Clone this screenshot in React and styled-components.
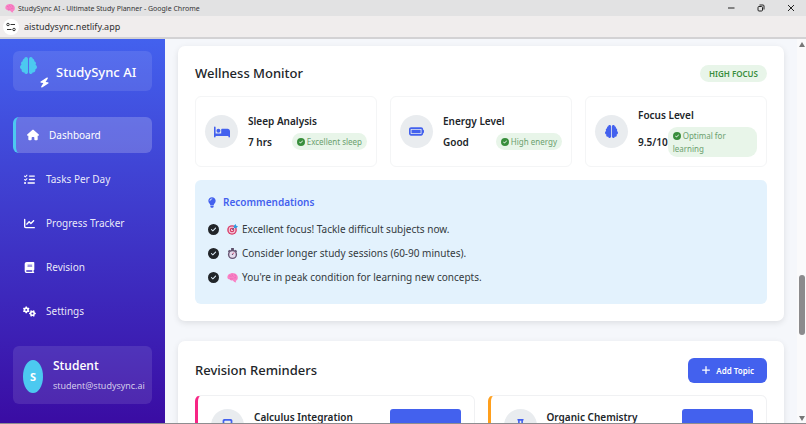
import React from 'react';
import styled, { createGlobalStyle } from 'styled-components';
import {
    FaBatteryFull,
    FaBed,
    FaBolt,
    FaBook,
    FaBrain,
    FaCalculator,
    FaChartLine,
    FaCircleCheck,
    FaFlask,
    FaGears,
    FaHouse,
    FaLightbulb,
    FaListCheck,
    FaPlus,
} from 'react-icons/fa6';

const AppGlobal = createGlobalStyle`
* {
    box-sizing:border-box;
    margin:0;
    padding:0;
}
body {
    background-color:#f5f7fb;
    color:#212529;
    font-family:"Noto Sans", "Open Sans", sans-serif;
    font-size:11px;
    overflow:hidden;
}
button, input {
    font-family:inherit;
    border:none;
}
svg {
    display:block;
    flex-shrink:0;
}
`

const Window = styled.div`
    display:flex;
    flex-direction:column;
    height:100vh;
    border-bottom:1px solid #8d8d90;
`

/* Browser chrome */
const TitleBar = styled.header`
    display:flex;
    align-items:center;
    gap:3px;
    height:16px;
    flex-shrink:0;
    padding-left:5px;
    background-color:#e2e2e3;
    color:#333;
    font-size:7px;
`
const WindowButtons = styled.div`
    display:flex;
    margin-left:auto;
`
const WindowButton = styled.button`
    display:flex;
    align-items:center;
    justify-content:center;
    width:30px;
    height:16px;
    background:none;
`
const AddressBar = styled.div`
    display:flex;
    align-items:center;
    gap:5px;
    height:23px;
    flex-shrink:0;
    padding-left:3px;
    background-color:#f0eded;
    border-bottom:2px solid #d3d2d4;
`
const SiteInfo = styled.button`
    display:flex;
    align-items:center;
    justify-content:center;
    width:16px;
    height:16px;
    border-radius:50%;
    background-color:#fff;
`
const Address = styled.input`
    flex:1;
    background:none;
    color:#303033;
    font-size:9px;
    outline:none;
`

const Page = styled.div`
    display:flex;
    flex:1;
    min-height:0;
`

/* Sidebar */
const Sidebar = styled.aside`
    width:165px;
    flex-shrink:0;
    padding:12px 13px;
    background:linear-gradient(180deg, #4361ee, #3a0ca3);
    color:#fff;
`
const Logo = styled.div`
    display:flex;
    align-items:center;
    gap:6px;
    height:40px;
    padding:2px 7px 0;
    border-radius:6px;
    background-color:rgba(255,255,255,0.1);
    font-size:13px;
    font-weight:500;
`
const LogoIcon = styled.span`
    display:flex;
    flex-direction:column;
    gap:3px;
    width:30px;
    color:#4cc9f0;
`
const LogoBolt = styled(FaBolt)`
    align-self:flex-end;
    color:#fff;
    transform:rotate(8deg);
`
const Nav = styled.nav`
    display:flex;
    flex-direction:column;
    gap:8px;
    margin:26px 0 17px;
`
const NavLink = styled.a`
    display:flex;
    align-items:center;
    gap:10px;
    height:36px;
    padding-left:10px;
    border-left:${props => props.$active ? '3px solid #4cc9f0' : 'none'};
    border-radius:6px;
    background-color:${props => props.$active ? 'rgba(255,255,255,0.2)' : 'transparent'};
    color:${props => props.$active ? '#fff' : 'rgba(255,255,255,0.9)'};
    font-size:10px;
    text-decoration:none;
`
const NavIcon = styled.span`
    display:flex;
    justify-content:center;
    width:13px;
    color:#fff;
`
const User = styled.div`
    display:flex;
    align-items:center;
    gap:10px;
    height:58px;
    padding:2px 10px 0;
    border-radius:6px;
    background-color:rgba(255,255,255,0.1);
    font-family:"Open Sans", "Noto Sans", sans-serif;
`
const Avatar = styled.div`
    display:flex;
    align-items:center;
    justify-content:center;
    width:20px;
    height:33px;
    flex-shrink:0;
    border-radius:50%;
    background-color:#4cc9f0;
    font-size:11px;
    font-weight:700;
`
const UserName = styled.p`
    font-size:12px;
    font-weight:600;
    line-height:20px;
`
const UserMail = styled.p`
    color:rgba(255,255,255,0.8);
    font-size:9px;
    line-height:20px;
`

/* Content */
const Main = styled.main`
    display:flex;
    flex-direction:column;
    gap:20px;
    flex:1;
    min-width:0;
    padding:7px 13px 0;
    overflow:hidden;
`
const Panel = styled.section`
    flex-shrink:0;
    padding:16px 17px 17px;
    border-radius:7px;
    background-color:#fff;
    box-shadow:0 2px 6px rgba(0,0,0,0.1);
`
const PanelHeader = styled.div`
    display:flex;
    align-items:center;
    justify-content:space-between;
    height:${props => props.$tall ? '26px' : '22px'};
    margin-bottom:12px;
`
const PanelTitle = styled.h2`
    font-size:13px;
    font-weight:500;
`
const FocusBadge = styled.span`
    padding:0 9px;
    border-radius:9px;
    background-color:#e8f5e9;
    color:#388e3c;
    font-size:8px;
    font-weight:600;
    line-height:17px;
`
const Metrics = styled.div`
    display:grid;
    grid-template-columns:repeat(3, 1fr);
    gap:13px;
    margin-bottom:13px;
`
const Metric = styled.div`
    display:flex;
    align-items:center;
    gap:10px;
    height:71px;
    padding:0 9px;
    border:1px solid #f4f5f6;
    border-radius:6px;
`
const IconCircle = styled.span`
    display:flex;
    align-items:center;
    justify-content:center;
    width:33px;
    height:33px;
    flex-shrink:0;
    border-radius:50%;
    background-color:#e9ecef;
    color:#4361ee;
`
const MetricBody = styled.div`
    flex:1;
    min-width:0;
`
const ItemTitle = styled.h3`
    font-size:10px;
    font-weight:600;
    line-height:16px;
`
const MetricRow = styled.div`
    display:flex;
    align-items:center;
    justify-content:space-between;
    margin-top:4px;
    font-size:10px;
    font-weight:600;
`
const Status = styled.span`
    padding:2px 5px;
    border-radius:9px;
    background-color:#e8f5e9;
    color:#6ba06e;
    font-size:8px;
    font-weight:400;
    line-height:13px;

    svg {
        display:inline-block;
        margin-right:2px;
        color:#388e3c;
        vertical-align:-1px;
    }
`
const Recommendations = styled.div`
    padding:13px 13px 15px;
    border-radius:6px;
    background-color:#e3f2fd;
`
const RecommendationsTitle = styled.h3`
    display:flex;
    align-items:center;
    gap:7px;
    margin-bottom:6px;
    color:#4361ee;
    font-size:10px;
    font-weight:600;
    line-height:18px;
`
const TitleIcon = styled(FaLightbulb)`
    width:8px;
`
const Tips = styled.ul`
    list-style:none;
`
const Tip = styled.li`
    display:flex;
    align-items:center;
    gap:4px;
    height:24px;
    color:#343a40;
    font-size:10px;
`
const TipCheck = styled(FaCircleCheck)`
    margin-right:4px;
    color:#212529;
`
const AddButton = styled.button`
    display:flex;
    align-items:center;
    gap:5px;
    height:25px;
    padding:0 13px;
    border-radius:6px;
    background-color:#4361ee;
    color:#fff;
    font-size:8px;
    font-weight:600;
`
const Reminders = styled.div`
    display:grid;
    grid-template-columns:repeat(2, 1fr);
    gap:13px;
`
const Reminder = styled.article`
    display:flex;
    align-items:flex-start;
    gap:10px;
    height:84px;
    padding:13px;
    border:1px solid #f0f1f3;
    border-left:3px solid ${props => props.$color};
    border-radius:6px;
`
const ReminderTitle = styled(ItemTitle)`
    flex:1;
`
const ReviewButton = styled.button`
    width:71px;
    height:26px;
    border-radius:3px;
    background-color:#4361ee;
`

/* Scroll track */
const ScrollTrack = styled.div`
    display:flex;
    flex-direction:column;
    align-items:center;
    justify-content:space-between;
    width:9px;
    flex-shrink:0;
    padding:3px 0 2px;
    background-color:#fafafb;
`
const ScrollThumb = styled.div`
    width:6px;
    height:60px;
    margin-top:auto;
    margin-bottom:81px;
    border-radius:3px;
    background-color:#8b8b8d;
`

const BrainEmoji = ({ size = 11 }) => (
    <svg width={size} height={size} viewBox="0 0 24 24" aria-hidden="true">
        <path d="M1 13C0 8 3 4 8 3c5-2 11 0 13 3 3 3 3 7 2 10-1 2-2 3-4 3l1 4-4-1-4-4c-3 1-6 0-6-2-3 0-4-1-5-3z" fill="#f982c5" />
        <path d="M5 9c2-2 4 0 4 2M11 5c-1 3 2 3 3 5M17 5c0 2 0 3 3 4M6 15c3 1 4-1 7 0M15 14c1-2 3-2 5-1" fill="none" stroke="#e05aac" strokeWidth="1.2" />
    </svg>
)

const TargetEmoji = () => (
    <svg width="11" height="11" viewBox="0 0 24 24" aria-hidden="true">
        <circle cx="11" cy="13" r="10.5" fill="#d83b68" />
        <circle cx="11" cy="13" r="7.5" fill="#f3c9da" />
        <circle cx="11" cy="13" r="5" fill="#d83b68" />
        <circle cx="11" cy="13" r="2" fill="#fff" />
        <path d="M11 13L19 5" stroke="#3a6fa8" strokeWidth="2" />
        <path d="M15 8V4l4-4 1 4 4 1-4 4z" fill="#2f9be0" />
    </svg>
)

const StopwatchEmoji = () => (
    <svg width="11" height="11" viewBox="0 0 24 24" aria-hidden="true">
        <path d="M9 0h6v5H9zM19 4l3 3-2 2-3-3zM5 4L2 7l2 2 3-3z" fill="#5b4d68" />
        <circle cx="12" cy="14" r="10" fill="#665472" />
        <circle cx="12" cy="14" r="7" fill="#e5dcec" />
        <path d="M12 14l3-4" stroke="#d83b68" strokeWidth="2" />
        <circle cx="12" cy="14" r="1.5" fill="#665472" />
    </svg>
)

const SiteIcon = () => (
    <svg width="10" height="10" viewBox="0 0 20 20" fill="none" stroke="#333" strokeWidth="2" aria-hidden="true">
        <circle cx="4" cy="5" r="2.5" />
        <path d="M9 5h9M2 15h9" />
        <circle cx="16" cy="15" r="2.5" />
    </svg>
)

const links = [
    { label: 'Dashboard', icon: <FaHouse size={12} />, active: true },
    { label: 'Tasks Per Day', icon: <FaListCheck size={11} /> },
    { label: 'Progress Tracker', icon: <FaChartLine size={11} /> },
    { label: 'Revision', icon: <FaBook size={11} /> },
    { label: 'Settings', icon: <FaGears size={13} /> },
]

const metrics = [
    { title: 'Sleep Analysis', value: '7 hrs', status: 'Excellent sleep', icon: <FaBed size={16} /> },
    { title: 'Energy Level', value: 'Good', status: 'High energy', icon: <FaBatteryFull size={15} /> },
    { title: 'Focus Level', value: '9.5/10', status: 'Optimal for learning', icon: <FaBrain size={13} /> },
]

const tips = [
    { emoji: <TargetEmoji />, text: 'Excellent focus! Tackle difficult subjects now.' },
    { emoji: <StopwatchEmoji />, text: 'Consider longer study sessions (60-90 minutes).' },
    { emoji: <BrainEmoji />, text: "You're in peak condition for learning new concepts." },
]

const reminders = [
    { title: 'Calculus Integration', color: '#f72585', icon: <FaCalculator size={13} /> },
    { title: 'Organic Chemistry', color: '#ff9f1c', icon: <FaFlask size={13} /> },
]

const App = () => {

    return(
        <>
        <AppGlobal/>
        <Window>

            {/* Browser chrome */}
            <TitleBar>
                <BrainEmoji size={10} />
                <span>StudySync AI - Ultimate Study Planner - Google Chrome</span>
                <WindowButtons>
                    <WindowButton aria-label="Minimize">
                        <svg width="8" height="8" viewBox="0 0 8 8"><path d="M1 4h6.5" stroke="#222" /></svg>
                    </WindowButton>
                    <WindowButton aria-label="Restore">
                        <svg width="8" height="8" viewBox="0 0 8 8" fill="none" stroke="#222"><rect x="1" y="2.5" width="4.5" height="4.5" rx="1" /><path d="M2.5 1h3.5a1 1 0 0 1 1 1v3.5" /></svg>
                    </WindowButton>
                    <WindowButton aria-label="Close">
                        <svg width="8" height="8" viewBox="0 0 8 8"><path d="M1 1l6 6M7 1L1 7" stroke="#222" /></svg>
                    </WindowButton>
                </WindowButtons>
            </TitleBar>
            <AddressBar>
                <SiteInfo aria-label="Site information"><SiteIcon /></SiteInfo>
                <Address aria-label="Address" defaultValue="aistudysync.netlify.app" />
            </AddressBar>

            <Page>
                {/* Sidebar */}
                <Sidebar>
                    <Logo>
                        <LogoIcon>
                            <FaBrain size={17} />
                            <LogoBolt size={11} />
                        </LogoIcon>
                        StudySync AI
                    </Logo>
                    <Nav>
                        {links.map(link => (
                            <NavLink key={link.label} href="#" $active={link.active}>
                                <NavIcon>{link.icon}</NavIcon>
                                {link.label}
                            </NavLink>
                        ))}
                    </Nav>
                    <User>
                        <Avatar>S</Avatar>
                        <div>
                            <UserName>Student</UserName>
                            <UserMail>student@studysync.ai</UserMail>
                        </div>
                    </User>
                </Sidebar>

                <Main>
                    {/* Wellness */}
                    <Panel>
                        <PanelHeader>
                            <PanelTitle>Wellness Monitor</PanelTitle>
                            <FocusBadge>HIGH FOCUS</FocusBadge>
                        </PanelHeader>
                        <Metrics>
                            {metrics.map(metric => (
                                <Metric key={metric.title}>
                                    <IconCircle>{metric.icon}</IconCircle>
                                    <MetricBody>
                                        <ItemTitle>{metric.title}</ItemTitle>
                                        <MetricRow>
                                            {metric.value}
                                            <Status><FaCircleCheck size={8} />{metric.status}</Status>
                                        </MetricRow>
                                    </MetricBody>
                                </Metric>
                            ))}
                        </Metrics>
                        <Recommendations>
                            <RecommendationsTitle><TitleIcon size={11} />Recommendations</RecommendationsTitle>
                            <Tips>
                                {tips.map(tip => (
                                    <Tip key={tip.text}>
                                        <TipCheck size={11} />
                                        {tip.emoji}
                                        {tip.text}
                                    </Tip>
                                ))}
                            </Tips>
                        </Recommendations>
                    </Panel>

                    {/* Revision */}
                    <Panel>
                        <PanelHeader $tall>
                            <PanelTitle>Revision Reminders</PanelTitle>
                            <AddButton><FaPlus size={10} />Add Topic</AddButton>
                        </PanelHeader>
                        <Reminders>
                            {reminders.map(reminder => (
                                <Reminder key={reminder.title} $color={reminder.color}>
                                    <IconCircle>{reminder.icon}</IconCircle>
                                    <ReminderTitle>{reminder.title}</ReminderTitle>
                                    <ReviewButton aria-label={reminder.title} />
                                </Reminder>
                            ))}
                        </Reminders>
                    </Panel>
                </Main>

                <ScrollTrack>
                    <svg width="6" height="5" viewBox="0 0 6 5"><path d="M3 0l3 5H0z" fill="#777" /></svg>
                    <ScrollThumb />
                    <svg width="6" height="5" viewBox="0 0 6 5"><path d="M3 5l3-5H0z" fill="#777" /></svg>
                </ScrollTrack>
            </Page>

        </Window>
        </>
    )
}

export default App
